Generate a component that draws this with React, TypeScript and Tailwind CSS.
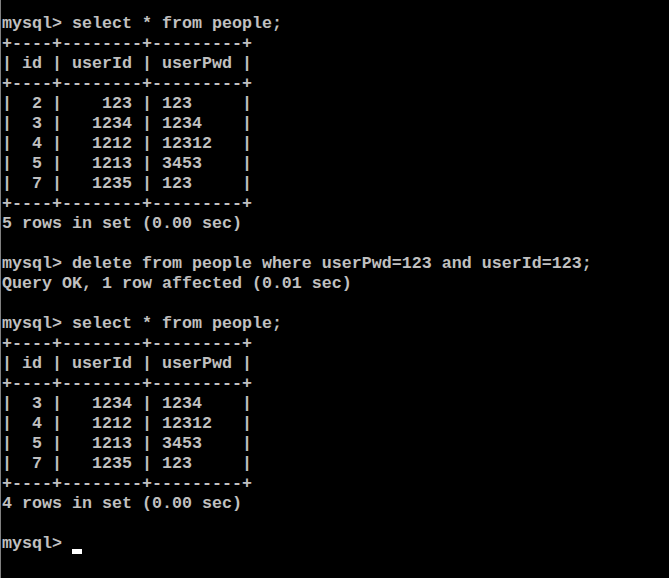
import React from "react";

const lines: string[] = [
  "mysql> select * from people;",
  "+----+--------+---------+",
  "| id | userId | userPwd |",
  "+----+--------+---------+",
  "|  2 |    123 | 123     |",
  "|  3 |   1234 | 1234    |",
  "|  4 |   1212 | 12312   |",
  "|  5 |   1213 | 3453    |",
  "|  7 |   1235 | 123     |",
  "+----+--------+---------+",
  "5 rows in set (0.00 sec)",
  "",
  "mysql> delete from people where userPwd=123 and userId=123;",
  "Query OK, 1 row affected (0.01 sec)",
  "",
  "mysql> select * from people;",
  "+----+--------+---------+",
  "| id | userId | userPwd |",
  "+----+--------+---------+",
  "|  3 |   1234 | 1234    |",
  "|  4 |   1212 | 12312   |",
  "|  5 |   1213 | 3453    |",
  "|  7 |   1235 | 123     |",
  "+----+--------+---------+",
  "4 rows in set (0.00 sec)",
  "",
];

export default function App() {
  return (
    <div className="h-[578px] w-full overflow-hidden bg-black border-l border-[#808080]">
      <div
        className="pt-[14px] pl-[1px] whitespace-pre text-[#c0c0c0] text-[16.67px] leading-[20px] font-bold"
        style={{ fontFamily: '"Liberation Mono", "DejaVu Sans Mono", monospace' }}
      >
        {lines.map((l, i) => (
          <div key={i} className="h-[20px]">
            {l}
          </div>
        ))}
        <div className="h-[20px]">
          {"mysql> "}
          <span className="inline-block w-[10px] h-[5px] bg-white align-[-6px]" />
        </div>
      </div>
    </div>
  );
}
